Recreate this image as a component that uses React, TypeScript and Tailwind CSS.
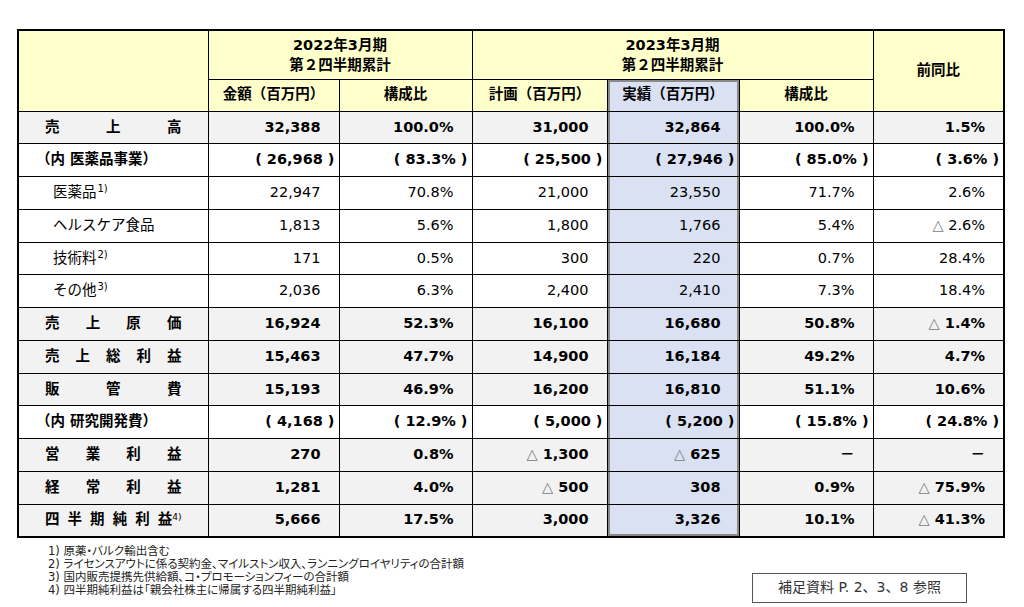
import React from 'react';

type Row = {
  label: string;
  sup?: string;
  kind: 'main' | 'paren' | 'sub';
  spread?: boolean;
  vals: string[];
};

const rows: Row[] = [
  { label: '売上高', kind: 'main', spread: true, vals: ['32,388', '100.0%', '31,000', '32,864', '100.0%', '1.5%'] },
  { label: '（内 医薬品事業）', kind: 'paren', vals: ['26,968', '83.3%', '25,500', '27,946', '85.0%', '3.6%'] },
  { label: '医薬品', sup: '1)', kind: 'sub', vals: ['22,947', '70.8%', '21,000', '23,550', '71.7%', '2.6%'] },
  { label: 'ヘルスケア食品', kind: 'sub', vals: ['1,813', '5.6%', '1,800', '1,766', '5.4%', '△ 2.6%'] },
  { label: '技術料', sup: '2)', kind: 'sub', vals: ['171', '0.5%', '300', '220', '0.7%', '28.4%'] },
  { label: 'その他', sup: '3)', kind: 'sub', vals: ['2,036', '6.3%', '2,400', '2,410', '7.3%', '18.4%'] },
  { label: '売上原価', kind: 'main', spread: true, vals: ['16,924', '52.3%', '16,100', '16,680', '50.8%', '△ 1.4%'] },
  { label: '売上総利益', kind: 'main', spread: true, vals: ['15,463', '47.7%', '14,900', '16,184', '49.2%', '4.7%'] },
  { label: '販管費', kind: 'main', spread: true, vals: ['15,193', '46.9%', '16,200', '16,810', '51.1%', '10.6%'] },
  { label: '（内 研究開発費）', kind: 'paren', vals: ['4,168', '12.9%', '5,000', '5,200', '15.8%', '24.8%'] },
  { label: '営業利益', kind: 'main', spread: true, vals: ['270', '0.8%', '△ 1,300', '△ 625', '－', '－'] },
  { label: '経常利益', kind: 'main', spread: true, vals: ['1,281', '4.0%', '△ 500', '308', '0.9%', '△ 75.9%'] },
  { label: '四半期純利益', sup: '4)', kind: 'main', spread: true, vals: ['5,666', '17.5%', '3,000', '3,326', '10.1%', '△ 41.3%'] },
];

const notes = [
  '1) 原薬・バルク輸出含む',
  '2) ライセンスアウトに係る契約金、マイルストン収入、ランニングロイヤリティの合計額',
  '3) 国内販売提携先供給額、コ・プロモーションフィーの合計額',
  '4) 四半期純利益は「親会社株主に帰属する四半期純利益」',
];

const blue = 'bg-[#d9e1f2] shadow-[inset_2px_0_0_#8a8a8a,inset_-2px_0_0_#8a8a8a]';

function Value({ v }: { v: string }) {
  if (v.startsWith('△ ')) {
    return (
      <>
        <span className="font-normal text-[#777]">△</span> {v.slice(2)}
      </>
    );
  }
  return <>{v}</>;
}

export default function App() {
  return (
    <div className="w-[1024px] h-[607px] bg-white pt-[29px] pl-[17px] text-black font-['DejaVu_Sans','Noto_Sans_CJK_JP',sans-serif]">
      <table className="border-collapse table-fixed w-[986px] border-2 border-black text-[14.5px]">
        <colgroup>
          <col className="w-[190px]" />
          <col className="w-[131px]" />
          <col className="w-[133px]" />
          <col className="w-[135px]" />
          <col className="w-[132px]" />
          <col className="w-[134px]" />
          <col className="w-[131px]" />
        </colgroup>
        <thead className="font-bold">
          <tr className="h-[49px] bg-[#ffffcc]">
            <td rowSpan={2} className="border border-black" />
            <td colSpan={2} className="border border-black text-center leading-[20px]">
              2022年3月期
              <br />
              第２四半期累計
            </td>
            <td colSpan={3} className="border border-black text-center leading-[20px]">
              2023年3月期
              <br />
              第２四半期累計
            </td>
            <td rowSpan={2} className="border border-black text-center">
              前同比
            </td>
          </tr>
          <tr className="h-[32px] bg-[#ffffcc]">
            <td className="border border-black text-center">金額（百万円）</td>
            <td className="border border-black text-center">構成比</td>
            <td className="border border-black text-center">計画（百万円）</td>
            <td className="border border-black text-center bg-[#d9e1f2] shadow-[inset_2px_0_0_#8a8a8a,inset_-2px_0_0_#8a8a8a,inset_0_2px_0_#8a8a8a]">
              実績（百万円）
            </td>
            <td className="border border-black text-center">構成比</td>
          </tr>
        </thead>
        <tbody>
          {rows.map((r, i) => {
            const bold = r.kind !== 'sub';
            const bg = r.kind === 'main' ? 'bg-[#f2f2f2]' : 'bg-white';
            const last = i === rows.length - 1;
            return (
              <tr key={i} className={`h-[32.75px] ${bg} ${bold ? 'font-bold' : ''}`}>
                <td className="border border-black">
                  {r.spread ? (
                    <div className="flex justify-between px-[26px]">
                      {r.label.split('').map((c, j, arr) => (
                        <span key={j}>
                          {c}
                          {j === arr.length - 1 && r.sup && (
                            <sup className="text-[9px] font-normal">{r.sup}</sup>
                          )}
                        </span>
                      ))}
                    </div>
                  ) : (
                    <div className={r.kind === 'paren' ? 'pl-[17px]' : 'pl-[34px]'}>
                      {r.label}
                      {r.sup && <sup className="text-[10px] ml-[1px]">{r.sup}</sup>}
                    </div>
                  )}
                </td>
                {r.vals.map((v, j) => (
                  <td
                    key={j}
                    className={`border border-black text-right whitespace-nowrap ${
                      r.kind === 'paren' ? 'pr-[4px]' : 'pr-[18px]'
                    } ${
                      j === 3
                        ? last
                          ? 'bg-[#d9e1f2] shadow-[inset_2px_0_0_#8a8a8a,inset_-2px_0_0_#8a8a8a,inset_0_-2px_0_#8a8a8a]'
                          : blue
                        : ''
                    }`}
                  >
                    {r.kind === 'paren' ? `( ${v} )` : <Value v={v} />}
                  </td>
                ))}
              </tr>
            );
          })}
        </tbody>
      </table>

      <div className="flex items-end justify-between w-[950px] mt-[7px]">
        <div className="pl-[31px] text-[11.5px] leading-[13px] text-[#222] [font-feature-settings:'palt']">
          {notes.map((n) => (
            <div key={n}>{n}</div>
          ))}
        </div>
        <div className="border border-[#555] w-[215px] h-[30px] flex items-center justify-center text-[14px] text-[#333] mb-[-6px]">
          補足資料 P. 2、3、8 参照
        </div>
      </div>
    </div>
  );
}
